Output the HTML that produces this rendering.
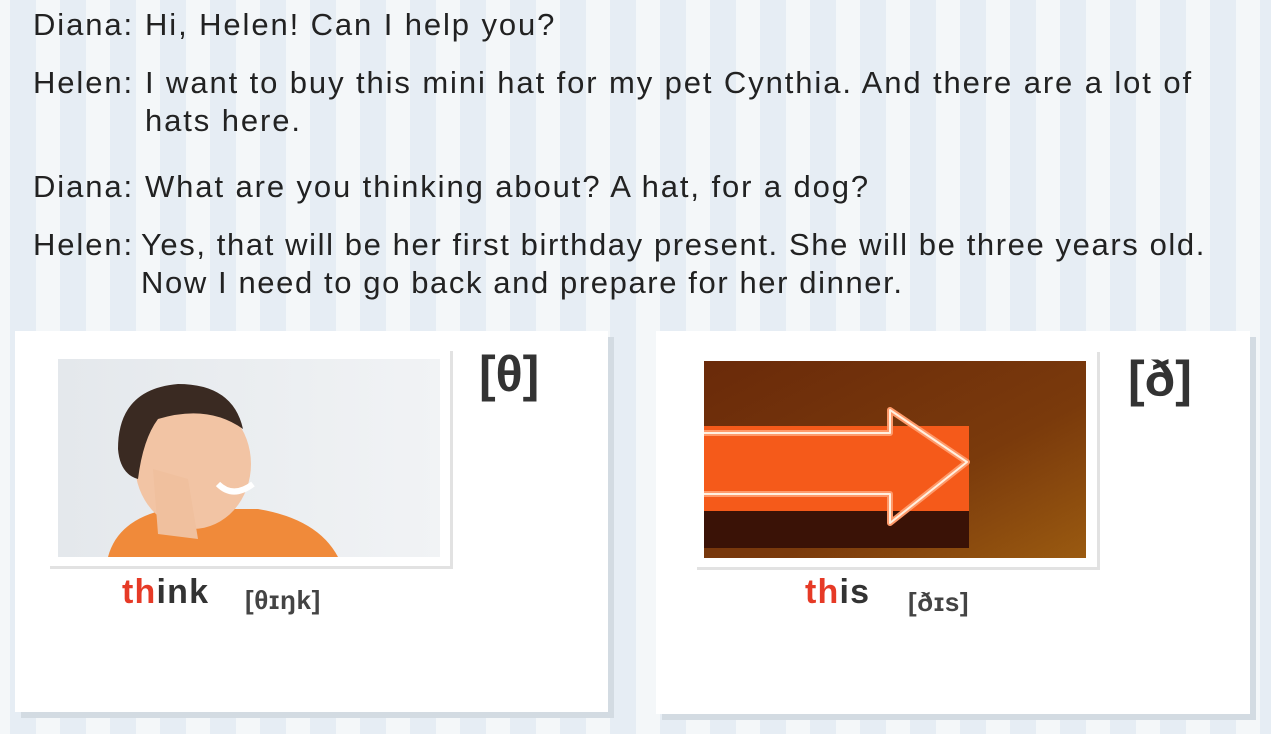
<!DOCTYPE html>
<html><head><meta charset="utf-8"><style>
*{margin:0;padding:0;box-sizing:border-box}
body{width:1271px;height:734px;overflow:hidden;position:relative;font-family:"Liberation Sans",sans-serif;
background:repeating-linear-gradient(90deg,#f4f7f9 0,#f4f7f9 10px,#e6edf4 10px,#e6edf4 36px,#f4f7f9 36px,#f4f7f9 50px);}
.t{position:absolute;font-size:31px;color:#222;white-space:nowrap;line-height:38px;letter-spacing:1.9px}
.card{position:absolute;background:#fff;box-shadow:6px 6px 0 #d3dbe2}
.frame{position:absolute;background:#fff;border-right:3px solid #e2e2e2;border-bottom:3px solid #e2e2e2}
.ph{position:absolute;font-weight:bold;font-size:50px;color:#333}
.w{position:absolute;font-weight:bold;font-size:34px;color:#333;letter-spacing:1.2px}
.w b{color:#e63a26}
.ipa{position:absolute;font-weight:bold;font-size:26px;color:#444;letter-spacing:0.6px}
</style></head><body>
<div class="t" style="left:33px;top:6px">Diana:</div>
<div class="t" style="left:145px;top:6px">Hi, Helen! Can I help you?</div>
<div class="t" style="left:33px;top:64px">Helen:</div>
<div class="t" style="left:145px;top:64px">I want to buy this mini hat for my pet Cynthia. And there are a lot of<br>hats here.</div>
<div class="t" style="left:33px;top:168px">Diana:</div>
<div class="t" style="left:145px;top:168px">What are you thinking about? A hat, for a dog?</div>
<div class="t" style="left:33px;top:226px">Helen:</div>
<div class="t" style="left:141px;top:226px;letter-spacing:1.6px">Yes, that will be her first birthday present. She will be three years old.<br>Now I need to go back and prepare for her dinner.</div>

<div class="card" style="left:15px;top:331px;width:593px;height:381px"></div>
<div class="frame" style="left:50px;top:351px;width:403px;height:218px"></div>
<svg style="position:absolute;left:58px;top:359px" width="382" height="198" viewBox="0 0 382 198">
<defs><linearGradient id="bg1" x1="0" x2="1"><stop offset="0" stop-color="#e4e8ec"/><stop offset="1" stop-color="#f1f3f5"/></linearGradient></defs>
<rect width="382" height="198" fill="url(#bg1)"/>
<path d="M50 198 Q60 160 110 150 L200 150 Q260 160 280 198Z" fill="#f08a3a"/>
<ellipse cx="135" cy="105" rx="58" ry="65" fill="#f2c4a4"/>
<path d="M60 90 Q60 30 120 25 Q175 25 185 70 Q150 45 100 60 Q85 80 80 120 Q62 115 60 90Z" fill="#3a2a22"/>
<path d="M95 110 L100 175 L140 180 L130 120Z" fill="#f0c09e"/>
<path d="M160 125 Q175 140 195 125" stroke="#fff" stroke-width="6" fill="none"/>
</svg>
<div class="ph" style="left:479px;top:345px">[θ]</div>
<div class="w" style="left:122px;top:573px"><b>th</b>ink</div>
<div class="ipa" style="left:245px;top:585px">[θɪŋk]</div>

<div class="card" style="left:656px;top:331px;width:594px;height:383px"></div>
<div class="frame" style="left:697px;top:352px;width:403px;height:218px"></div>
<svg style="position:absolute;left:704px;top:361px" width="382" height="197" viewBox="0 0 382 197">
<defs><linearGradient id="bg2" x1="0" y1="0" x2="1" y2="1"><stop offset="0" stop-color="#6a2a0a"/><stop offset="0.6" stop-color="#7a3a0c"/><stop offset="1" stop-color="#9a5a10"/></linearGradient></defs>
<rect width="382" height="197" fill="url(#bg2)"/>
<rect x="0" y="65" width="265" height="90" fill="#f55a1a"/>
<rect x="0" y="150" width="265" height="37" fill="#3a1206"/>
<path d="M0 72 L186 72 L186 49 L263 101 L186 162 L186 133 L0 133" fill="none" stroke="#ff9a6a" stroke-width="6" stroke-linejoin="round"/>
<path d="M0 72 L186 72 L186 49 L263 101 L186 162 L186 133 L0 133" fill="none" stroke="#fff0e0" stroke-width="2" stroke-linejoin="round"/>
</svg>
<div class="ph" style="left:1128px;top:350px">[ð]</div>
<div class="w" style="left:805px;top:573px"><b>th</b>is</div>
<div class="ipa" style="left:908px;top:587px">[ðɪs]</div>
</body></html>
